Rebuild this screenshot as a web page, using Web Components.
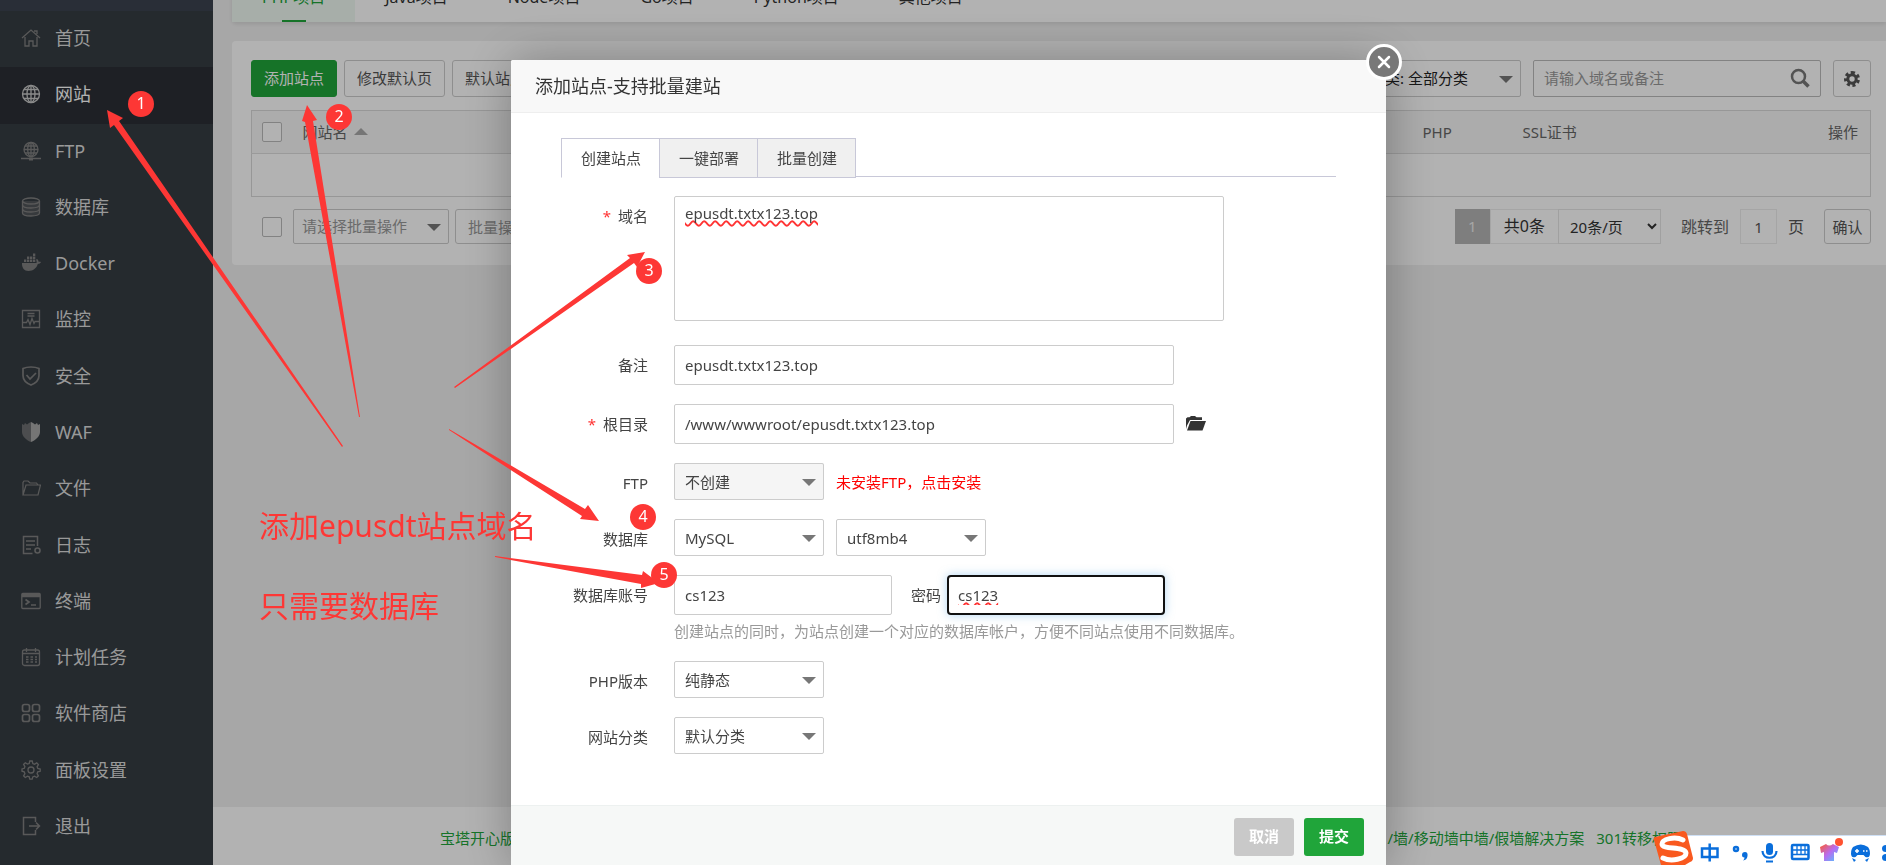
<!DOCTYPE html>
<html lang="zh-CN">
<head>
<meta charset="utf-8">
<title>网站 - 添加站点</title>
<style>
html, body { margin: 0; height: 100%; }
body {
  font-family: "Noto Sans", "Noto Sans CJK SC", sans-serif;
  font-size: 15px; line-height: 20px; color: #555; background: #f0f0f0; overflow: hidden;
}
</style>
</head>
<body>
<panel-app></panel-app>

<script>
const RESET = `
  *, *::before, *::after { box-sizing: border-box; }
  button, input, select, textarea { font: inherit; color: inherit; margin: 0; }
  a { color: inherit; text-decoration: none; }
  .sel { position: relative; display: inline-flex; }
  .sel select { appearance: none; width: 100%; height: 100%; padding: 0 28px 0 10px; border: 1px solid #ccc; border-radius: 2px; background: transparent; }
  .sel::after { content: ""; position: absolute; right: 8px; top: 50%; margin-top: -3px; border: 7px solid transparent; border-top-color: #777; border-bottom: 0; pointer-events: none; }
`;
function define(name, css, html, setup) {
  const t = document.createElement('template');
  t.innerHTML = `<style>${RESET}${css}</style>${html}`;
  customElements.define(name, class extends HTMLElement {
    constructor() {
      super();
      this.attachShadow({ mode: 'open' }).append(t.content.cloneNode(true));
    }
    connectedCallback() { if (setup) setup(this, this.shadowRoot); }
  });
}

/* ---------- sidebar ---------- */
define('nav-item', `
  :host { display: flex; flex: 1; color: #dcdcdc; }
  :host([active]) { background: #2b2f36; color: #fff; }
  a { flex: 1; display: flex; align-items: center; gap: 14px; padding: 0 0 2px 21px; font-size: 18px; line-height: 24px; }
  .icon { display: flex; color: #808080; }
  :host([active]) .icon { color: #c8c8c8; }
  ::slotted(svg) { width: 20px; height: 20px; fill: none; stroke: currentColor; stroke-width: 1.3; }
`, `<a href="#"><span class="icon"><slot name="icon"></slot></span><slot></slot></a>`);

const ICONS = {
  home: '<path d="M1 10 10 2l9 8M4 9v9h4v-5h4v5h4V9M13 3h3v3"/>',
  globe: '<circle cx="10" cy="10" r="8.5"/><ellipse cx="10" cy="10" rx="4" ry="8.5"/><path d="M10 1.500v17M1.500 10h17M3 5.500h14M3 14.500h14"/>',
  ftp: '<circle cx="10" cy="8.500" r="7"/><ellipse cx="10" cy="8.500" rx="3.300" ry="7"/><path d="M10 1.500v14M3 8.500h14M4 5h12M4 12h12M0 17.500h20" /><path d="M8 18h4" stroke-width="3"/>',
  db: '<path fill="currentColor" fill-opacity=".35" d="M1.500 4v12c0 2 4 3 8.500 3s8.500-1 8.500-3V4"/><ellipse cx="10" cy="4" rx="8.500" ry="3"/><path d="M1.500 8c0 2 4 3 8.500 3s8.500-1 8.500-3M1.500 12c0 2 4 3 8.500 3s8.500-1 8.500-3"/>',
  docker: '<path fill="currentColor" stroke="none" d="M1 10h14.500c.3-1.300 0-2.500-.5-3.300l1-.7c1 .7 1.500 1.800 1.500 2.700 1-.1 2 0 2.500.4-.5 1.300-1.700 2-3.200 2C15.500 15.500 12 18 7.500 18 3 18 .8 15 1 10zM3 6.500h2.300v2.500H3zM6 6.500h2.300v2.500H6zM9 6.500h2.300v2.500H9zM12 6.500h2.300v2.500H12zM6 3.500h2.300V6H6zM9 3.500h2.300V6H9zM12 3.500h2.300V6H12zM12 .5h2.300V3H12z"/>',
  monitor: '<path d="M1.500 1.500h17v17h-17zM1.500 13.500h4l1.500-3 2 5 2-6 2 5 1-2h4.500M6.500 4.500h7M6.500 7h7"/>',
  safe: '<path stroke-width="1.700" d="M10 1c3 0 6 .6 8 1.500v7c0 4-3 7.500-8 9.500-5-2-8-5.500-8-9.500v-7C4 1.600 7 1 10 1zM5.500 9l3.500 4 6-6"/>',
  waf: '<path stroke="none" fill="currentColor" fill-opacity=".75" d="M10 0v20C5 18 1 14 1 10V2l2 1 1-2 2 1.500L8 1z"/><path stroke="none" fill="#a8a8a8" d="M10 0v20c5-2 9-6 9-10V2l-2 1-1-2-2 1.500L12 1z"/>',
  folder: '<path stroke-width="1.200" d="M2 16.500v-12l1-1.500h4l2 2h6.500L17 7M2 17 5 7h14.500L17 17z"/>',
  log: '<path stroke-width="1.500" d="M16.500 11V1.500h-14v17h9M5 6h9M5 10h9M5 14h5"/><circle cx="16.500" cy="15.500" r="2.500" stroke-width="1.600"/>',
  term: '<rect x=".8" y="2.500" width="18.400" height="15" rx="1"/><path d="M1 4.500h18" stroke-width="3.500"/><path stroke-width="1.700" d="m4.500 8.500 3.500 2.500-3.500 2.500M10 14h5"/>',
  cal: '<rect x="1.500" y="3" width="17" height="15.500" rx="2"/><path d="M2 6.500h16M5.500 1v4M14.500 1v4"/><path stroke-dasharray="2.500 2" d="M5 10h11M5 12.500h11M5 15h11"/>',
  apps: '<g stroke-width="1.700"><rect x="1.500" y="1.500" width="7" height="7" rx="2"/><rect x="11.500" y="1.500" width="7" height="7" rx="2"/><rect x="1.500" y="11.500" width="7" height="7" rx="2"/><rect x="11.500" y="11.500" width="7" height="7" rx="2"/></g>',
  gear: '<path d="m8.200 3.500.6-2.500h2.400l.6 2.500 1.700.7 2.200-1.300 1.700 1.700-1.300 2.200.7 1.700 2.400.5v2.300l-2.500.6-.6 1.700 1.300 2.200-1.700 1.700-2.200-1.300-1.700.7-.6 2.300H8.800l-.6-2.400-1.700-.6-2.200 1.300-1.700-1.700 1.300-2.200-.7-1.700L1 11.200V8.900l2.300-.6.6-1.700-1.300-2.200 1.700-1.700 2.200 1.300z"/><circle cx="10" cy="10" r="3"/>',
  exit: '<path stroke-width="1.500" d="M14.500 6V1.500h-12v17h12V14M8 10h10.500M15 6.500l3.500 3.500-3.500 3.500"/>'
};
const NAV = [['home','首页'],['globe','网站'],['ftp','FTP'],['db','数据库'],['docker','Docker'],['monitor','监控'],['safe','安全'],['waf','WAF'],['folder','文件'],['log','日志'],['term','终端'],['cal','计划任务'],['apps','软件商店'],['gear','面板设置'],['exit','退出']];
define('side-bar', `
  :host { display: flex; flex-direction: column; width: 213px; flex: none; background: #363d43; }
  .top { height: 11px; background: #3c4250; }
  nav { flex: 1; display: flex; flex-direction: column; padding-bottom: 10px; }
`, `<div class="top"></div><nav>${NAV.map(([i, n], k) => `<nav-item${k === 1 ? ' active' : ''}><svg slot="icon" viewBox="0 0 20 20">${ICONS[i]}</svg>${n}</nav-item>`).join('')}</nav>`);

/* ---------- project tabs ---------- */
define('project-tabs', `
  :host { display: flex; height: 50px; background: #fff; border-radius: 0 0 0 4px; box-shadow: 0 2px 4px rgba(0,0,0,.1); font-size: 16px; }
  a { display: flex; align-items: center; padding: 0 30px; position: relative; color: #333; }
  a.on { color: #20a53a; background: #f0faf3; }
  a.on::after { content: ""; position: absolute; left: 50%; bottom: 0; width: 24px; margin-left: -12px; height: 2px; background: #20a53a; }
`, `<a class="on" href="#">PHP项目</a><a href="#">Java项目</a><a href="#">Node项目</a><a href="#">Go项目</a><a href="#">Python项目</a><a href="#">其他项目</a>`);

/* ---------- site list card ---------- */
define('sites-panel', `
  :host { display: block; background: #fff; border-radius: 4px 0 0 4px; padding: 19px 15px 21px 19px; }
  .bar { display: flex; align-items: center; }
  .bar.tools { gap: 7px; height: 37px; margin-bottom: 13px; }
  .btn { height: 37px; padding: 0 12px 2px; border: 1px solid #ccc; border-radius: 3px; background: #fff; color: #555; white-space: nowrap; }
  .btn.green { background: #20a53a; border-color: #20a53a; color: #fff; }
  .grow { flex: 1; }
  .tools .sel { width: 164px; height: 37px; margin-right: 5px; color: #222; }
  .tools .sel select { padding: 0 28px 2px 12px; }
  .search { display: flex; align-items: center; width: 288px; height: 37px; border: 1px solid #bbb; border-radius: 2px; margin-right: 5px; padding: 0 10px 2px; }
  .search input { flex: 1; min-width: 0; border: 0; padding: 0; outline: 0; background: none; }
  input::placeholder { color: #999; opacity: 1; }
  .search svg { width: 20px; height: 20px; }
  .btn.cog { width: 38px; padding: 0; display: flex; align-items: center; justify-content: center; }
  .cog svg { width: 16px; height: 16px; }
  table { width: 100%; table-layout: fixed; border-collapse: collapse; border: 1px solid #d9d9d9; }
  th { height: 43px; padding: 0 12px; background: #f6f6f6; border-bottom: 1px solid #ddd; font-weight: 400; text-align: left; color: #666; }
  th:last-child { text-align: right; }
  th:first-child { padding: 0 0 0 10px; }
  td { height: 43px; }
  .sort { display: inline-block; border: 7px solid transparent; border-bottom-color: #aaa; border-top: 0; margin: 0 0 3px 3px; }
  input[type=checkbox] { appearance: none; width: 20px; height: 20px; border: 1px solid #bbb; border-radius: 2px; background: #fff; display: block; flex: none; }
  .bar.foot { margin-top: 12px; height: 35px; }
  .foot input[type=checkbox] { margin: 0 11px; }
  .foot .batch { width: 156px; height: 35px; color: #999; margin-right: 6px; }
  .foot .batch select { padding: 0 28px 2px 8px; }
  .foot .btn { height: 35px; padding-bottom: 0; }
  .foot .act { color: #999; }
  .page { width: 35px; height: 35px; line-height: 35px; text-align: center; background: #b5b5b5; color: #eee; }
  .total { height: 35px; line-height: 33px; padding: 0 13px; border: 1px solid #ececec; color: #333; font-size: 16px; }
  .size { width: 103px; height: 35px; border: 1px solid #e6e6e6; margin-left: -1px; padding: 0 4px 0 7px; background: #fff; color: #333; }
  .jump { margin-left: 20px; color: #666; font-size: 16px; }
  .num { width: 37px; height: 35px; margin: 0 11px; border: 1px solid #ececec; text-align: center; padding: 0; background: #fff; }
  .unit { font-size: 16px; }
  .btn.ok { margin-left: 20px; padding: 0; width: 47px; }
`, `
  <div class="bar tools">
    <button class="btn green">添加站点</button><button class="btn">修改默认页</button><button class="btn">默认站点</button>
    <span class="grow"></span>
    <span class="sel"><select aria-label="分类"><option>分类: 全部分类</option></select></span>
    <label class="search"><input placeholder="请输入域名或备注"><svg viewBox="0 0 20 20" fill="none" stroke="#777"><circle cx="8.500" cy="8.500" r="6.500" stroke-width="2.500"/><path d="m13 13 5.500 5.500" stroke-width="3.500"/></svg></label>
    <button class="btn cog" aria-label="设置"><svg viewBox="0 0 16 16"><path fill="none" stroke="#555" stroke-width="3" stroke-dasharray="3 2.500" d="M8 1.500a6.500 6.500 0 1 1 0 13 6.500 6.500 0 1 1 0-13"/><circle cx="8" cy="8" r="4.200" fill="none" stroke="#555" stroke-width="3"/></svg></button>
  </div>
  <table>
    <colgroup><col style="width:39px"><col><col style="width:100px"><col style="width:240px"><col style="width:120px"></colgroup>
    <thead><tr><th><input type="checkbox" aria-label="全选"></th><th>网站名 <span class="sort"></span></th><th>PHP</th><th>SSL证书</th><th>操作</th></tr></thead>
    <tbody><tr><td colspan="5"></td></tr></tbody>
  </table>
  <div class="bar foot">
    <input type="checkbox" aria-label="选择全部">
    <span class="sel batch"><select aria-label="批量操作"><option>请选择批量操作</option></select></span>
    <button class="btn act">批量操作</button>
    <span class="grow"></span>
    <span class="page">1</span><span class="total">共0条</span>
    <select class="size" aria-label="每页条数"><option>20条/页</option></select>
    <label class="jump" for="pg">跳转到</label><input class="num" id="pg" value="1"><span class="unit">页</span>
    <button class="btn ok">确认</button>
  </div>`);

/* ---------- page footer ---------- */
define('page-footer', `
  :host { display: flex; align-items: center; gap: 12px; height: 58px; padding: 4px 204px 0 227px; background: #fff; color: #20a53a; white-space: nowrap; }
  .grow { flex: 1; }
`, `<a href="#">宝塔开心版</a><span class="grow"></span><a href="#">/墙/移动墙中墙/假墙解决方案</a><a href="#">301转移权限</a>`);

/* ---------- add-site dialog ---------- */
define('site-dialog', `
  :host { position: fixed; inset: 0; display: flex; justify-content: center; align-items: flex-start; padding: 60px 0 0 11px; background: rgba(0,0,0,.3); overflow: hidden; color: #444; }
  .box { position: relative; width: 875px; background: #fff; border-radius: 2px; box-shadow: 1px 1px 50px rgba(0,0,0,.3); }
  .close { position: absolute; right: -16px; top: -16px; width: 36px; height: 36px; padding: 0; border: 3px solid #fff; border-radius: 50%; background: #787878; display: flex; align-items: center; justify-content: center; }
  h2 { margin: 0; height: 53px; padding: 0 24px; font-weight: 400; font-size: 18px; line-height: 52px; color: #333; background: #f8f8f8; border-bottom: 1px solid #eee; border-radius: 2px 2px 0 0; }
  .body { padding: 25px 50px 51px; }
  .tabs { display: flex; height: 39px; border-bottom: 1px solid #c8c8d8; }
  .tabs button { height: 40px; padding: 0 18px 0 19px; border: 1px solid #c8c8d8; background: #f0f0f0; white-space: nowrap; }
  .tabs button + button { margin-left: -1px; }
  .tabs .on { background: #fff; border-bottom-color: #fff; }
  form { margin-top: 19px; display: grid; gap: 19px; }
  .row { display: grid; grid-template-columns: 87px 1fr; column-gap: 26px; }
  .row.sm { grid-template-rows: 37px; }
  .row > label { text-align: right; line-height: 40px; white-space: nowrap; }
  .req { color: #f33; margin-right: 7px; }
  .ctl { display: flex; align-items: center; flex-wrap: wrap; }
  input, textarea { height: 40px; padding: 0 10px; border: 1px solid #ccc; border-radius: 2px; background: #fff; outline: 0; width: 500px; }
  textarea { display: block; width: 550px; height: 125px; padding: 6px 10px; resize: none; margin-bottom: 5px; }
  .typo { text-decoration: underline wavy #f33 2px; text-decoration-skip-ink: none; text-underline-offset: 1px; }
  .sel { width: 150px; height: 37px; margin-right: 12px; }
  .sel.off { background: #f5f5f5; }
  .short { width: 218px; }
  .pw { margin: 0 6px 0 19px; }
  .focus { border: 2px solid #111; border-radius: 4px; padding: 0 9px; box-shadow: 0 0 10px rgba(102,175,233,.5); }
  .install { color: #f00; }
  .folder { border: 0; background: none; padding: 0; margin-left: 12px; display: flex; }
  .hint { margin: 0; width: 100%; padding-top: 5px; line-height: 22px; color: #999; }
  footer { display: flex; justify-content: flex-end; gap: 10px; padding: 12px 22px; background: #f6f8f7; border-top: 1px solid #edf1f0; }
  footer button { width: 60px; height: 38px; padding: 0 0 2px; border: 0; border-radius: 3px; background: #c9c9c9; color: #fff; font-weight: 700; }
  footer .go { background: #20a53a; }
`, `
  <div class="box" role="dialog" aria-labelledby="ttl">
    <h2 id="ttl">添加站点-支持批量建站</h2>
    <button class="close" aria-label="关闭"><svg width="16" height="16" viewBox="0 0 16 16" stroke="#fff" stroke-width="2.500" stroke-linecap="round"><path d="m3 3 10 10M13 3 3 13"/></svg></button>
    <div class="body">
      <div class="tabs"><button class="on">创建站点</button><button>一键部署</button><button>批量创建</button></div>
      <form>
        <div class="row"><label for="domain"><span class="req">*</span>域名</label><div class="ctl"><textarea id="domain" class="typo" spellcheck="false">epusdt.txtx123.top</textarea></div></div>
        <div class="row"><label for="note">备注</label><div class="ctl"><input id="note" value="epusdt.txtx123.top"></div></div>
        <div class="row"><label for="root"><span class="req">*</span>根目录</label><div class="ctl"><input id="root" value="/www/wwwroot/epusdt.txtx123.top"><button type="button" class="folder" aria-label="选择目录"><svg width="20" height="16" viewBox="0 0 20 16" fill="#333"><path d="M0 13V2.500L1.500 1.300h2L5 0h4l1.500 1.300H16V4H4L1 9.500z"/><path d="M4.500 5H20l-3.500 9.500H1z"/></svg></button></div></div>
        <div class="row sm"><label for="ftp">FTP</label><div class="ctl"><span class="sel off"><select id="ftp"><option>不创建</option></select></span><a class="install" href="#">未安装FTP，点击安装</a></div></div>
        <div class="row sm"><label for="dbt">数据库</label><div class="ctl"><span class="sel"><select id="dbt"><option>MySQL</option></select></span><span class="sel"><select aria-label="编码"><option>utf8mb4</option></select></span></div></div>
        <div class="row"><label for="acc">数据库账号</label><div class="ctl"><input id="acc" class="short" value="cs123"><label class="pw" for="pw">密码</label><input id="pw" class="short focus typo" spellcheck="false" value="cs123"><p class="hint">创建站点的同时，为站点创建一个对应的数据库帐户，方便不同站点使用不同数据库。</p></div></div>
        <div class="row sm"><label for="php">PHP版本</label><div class="ctl"><span class="sel"><select id="php"><option>纯静态</option></select></span></div></div>
        <div class="row sm"><label for="cat">网站分类</label><div class="ctl"><span class="sel"><select id="cat"><option>默认分类</option></select></span></div></div>
      </form>
    </div>
    <footer><button>取消</button><button class="go">提交</button></footer>
  </div>`);

/* ---------- hand-drawn notes lying over the page ---------- */
define('step-badge', `
  :host { position: absolute; width: 26px; height: 26px; border-radius: 50%; background: #fd3735; color: #fff; font-size: 16px; line-height: 24px; text-align: center; }
`, `<slot></slot>`);
define('note-layer', `
  :host { position: fixed; inset: 0; pointer-events: none; overflow: hidden; color: #fd3735; }
  svg { position: absolute; left: 0; top: 0; width: 1886px; height: 865px; fill: currentColor; }
  .notes { position: absolute; left: 259px; top: 506px; display: grid; gap: 40px; }
  p { margin: 0; font-size: 30px; line-height: 40px; white-space: nowrap; }
`, `
  <svg viewBox="0 0 1886 865">
    <path d="M107 110 123 118 119 121 343 446 342 447 114 125 110 128z"/>
    <path d="M307 105 317 120 313 121 360 417 359 417 305 122 302 121z"/>
    <path d="M645 252 637 267 634 263 455 388 454 387 630 258 627 255z"/>
    <path d="M599 521 588 505 585 509 449 429 449 430 582 516 580 519z"/>
    <path d="M659 583 643 571 642 575 495 556 495 557 641 584 641 588z"/>
  </svg>
  <step-badge style="left:128px;top:91px">1</step-badge>
  <step-badge style="left:326px;top:104px">2</step-badge>
  <step-badge style="left:636px;top:258px">3</step-badge>
  <step-badge style="left:630px;top:504px">4</step-badge>
  <step-badge style="left:651px;top:562px">5</step-badge>
  <div class="notes"><p>添加epusdt站点域名</p><p>只需要数据库</p></div>`);

/* ---------- input-method toolbar ---------- */
define('ime-bar', `
  :host { position: fixed; right: 0; bottom: 0; display: flex; align-items: flex-end; height: 34px; }
  .logo { position: relative; z-index: 1; display: block; margin-right: -14px; }
  .strip { display: block; background: #fff; border-top: 1px solid #cfe0f5; }
`, `
  <svg class="logo" width="41" height="34" viewBox="0 0 41 34"><path fill="#f9591f" d="M2 6 30 0q3 0 4 3l6 24q0 3-3 4l-5 3H8L1 9q-1-2 1-3z"/><path fill="none" stroke="#fff" stroke-width="5" stroke-linecap="round" d="M30 9C22 5 9 8 9 13c0 6 23 2 24 9 0 6-15 9-23 5"/></svg>
  <svg class="strip" width="206" height="30" viewBox="1680 836 206 29" fill="none" stroke="#0a6edb" stroke-width="2.500">
    <path d="M1702 848.500h15.500v8.500h-15.500zM1709.700 843.500v18"/>
    <circle cx="1736" cy="849" r="2"/><path fill="#0a6edb" stroke="none" d="M1742 855q0-3 3-3 3 0 2.500 4-.5 4-4.500 4.500 1.500-1 1.500-3-2.500 0-2.500-2.500z"/>
    <rect x="1766" y="843" width="7" height="12" rx="3.500" fill="#0a6edb" stroke="none"/><path d="M1762.500 851c0 9 14 9 14 0M1766 861.500h7" stroke-width="2.200"/>
    <rect x="1792" y="845" width="16.500" height="14" rx="1"/><path stroke-width="1.300" d="M1792 850h16M1792 854.500h16M1797 845v9M1801 845v9M1805 845v9"/>
    <linearGradient id="g" x1="0" y1="0" x2="1" y2="1"><stop offset="0" stop-color="#ff5a2b"/><stop offset=".5" stop-color="#b86cf0"/><stop offset="1" stop-color="#4cc8ff"/></linearGradient>
    <path fill="url(#g)" stroke="none" d="m1820 847 6-3q3 3 7 0l6 3-2 6-3-1v9h-10v-9l-3 1z"/>
    <circle cx="1839" cy="842" r="4" fill="#ff5230" stroke="none"/>
    <path fill="#0a6edb" stroke="none" d="M1853 847q8-5 15 0 3 4 1.500 9-1 2-4 1l-2-2h-6l-2 2q-3 1-4-1-1.500-5 1.500-9zM1852 858l4 2-2 2zM1869 858l-4 2 2 2z"/><path stroke="#fff" stroke-width="1.500" d="M1855 851h4M1857 849v4M1863 851h1.500M1866 851h1.500"/>
    <path fill="#0a6edb" stroke="none" d="M1886 845q-4 0-4 3.500t4 3.500zM1886 854q-4 0-4 3.500t4 3.500z"/>
  </svg>`);

/* ---------- page ---------- */
define('panel-app', `
  :host { display: flex; height: 100vh; overflow: hidden; }
  main { flex: 1; min-width: 0; display: flex; flex-direction: column; }
  .content { flex: 1; padding-left: 19px; margin-top: -28px; display: flex; flex-direction: column; gap: 19px; }
`, `
  <side-bar></side-bar>
  <main><div class="content"><project-tabs></project-tabs><sites-panel></sites-panel></div><page-footer></page-footer></main>
  <site-dialog></site-dialog><note-layer></note-layer><ime-bar></ime-bar>`);
</script>
</body>
</html>
